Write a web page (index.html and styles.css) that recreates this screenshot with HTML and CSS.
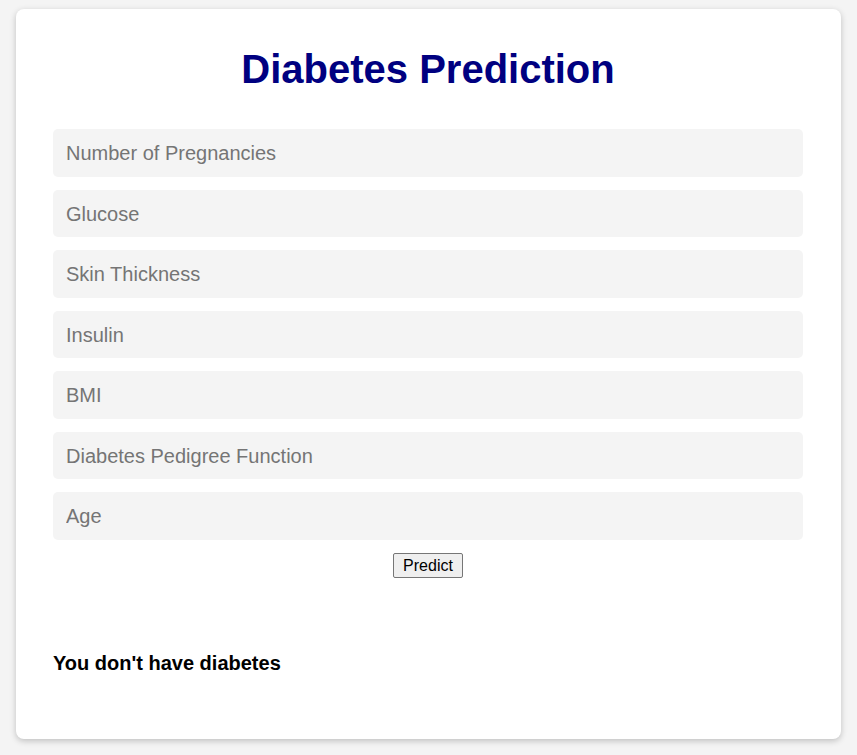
FILE: index.html
```html
<!DOCTYPE html>
<html lang="en">
<head>
<meta charset="utf-8">
<title>Diabetes Prediction</title>
<link rel="stylesheet" href="styles.css">
</head>
<body>
<div class="card">
  <h1 class="title">Diabetes Prediction</h1>
  <form class="form">
    <input class="field" type="text" placeholder="Number of Pregnancies">
    <input class="field" type="text" placeholder="Glucose">
    <input class="field" type="text" placeholder="Skin Thickness">
    <input class="field" type="text" placeholder="Insulin">
    <input class="field" type="text" placeholder="BMI">
    <input class="field" type="text" placeholder="Diabetes Pedigree Function">
    <input class="field" type="text" placeholder="Age">
    <div class="actions"><button class="btn" type="button">Predict</button></div>
  </form>
  <p class="result">You don't have diabetes</p>
</div>
</body>
</html>
```

FILE: styles.css
```css
html, body {
  margin: 0;
  background: #f4f4f4;
  font-family: "Liberation Sans", Arial, sans-serif;
}
body {
  padding: 9px 16px 16px;
}
.card {
  background: #fff;
  border-radius: 8px;
  box-shadow: 0 2px 6px rgba(0, 0, 0, 0.22);
  padding: 37px 38px 0 37px;
  height: 730px;
  box-sizing: border-box;
}
.title {
  margin: 0 0 37px;
  text-align: center;
  color: #000080;
  font-size: 40px;
  font-weight: bold;
  line-height: 46px;
}
.form {
  margin: 0;
}
.field {
  display: block;
  width: 100%;
  box-sizing: border-box;
  height: 47.5px;
  margin: 0 0 13px;
  padding: 2px 12px 0 13px;
  border: none;
  border-radius: 5px;
  background: #f4f4f4;
  font-family: "Liberation Sans", Arial, sans-serif;
  font-size: 20px;
  color: #333;
  outline: none;
}
.field::placeholder {
  color: #757575;
}
.actions {
  display: flex;
  justify-content: center;
  padding-top: 0.5px;
}
.btn {
  height: 25px;
  padding: 0 9px;
  font-family: "Liberation Sans", Arial, sans-serif;
  font-size: 16px;
  color: #000;
  background: #efefef;
  border: 1px solid #767676;
  border-radius: 2px;
}
.result {
  margin: 74px 0 0;
  font-size: 20px;
  font-weight: bold;
  line-height: 23px;
  color: #000;
}
```
